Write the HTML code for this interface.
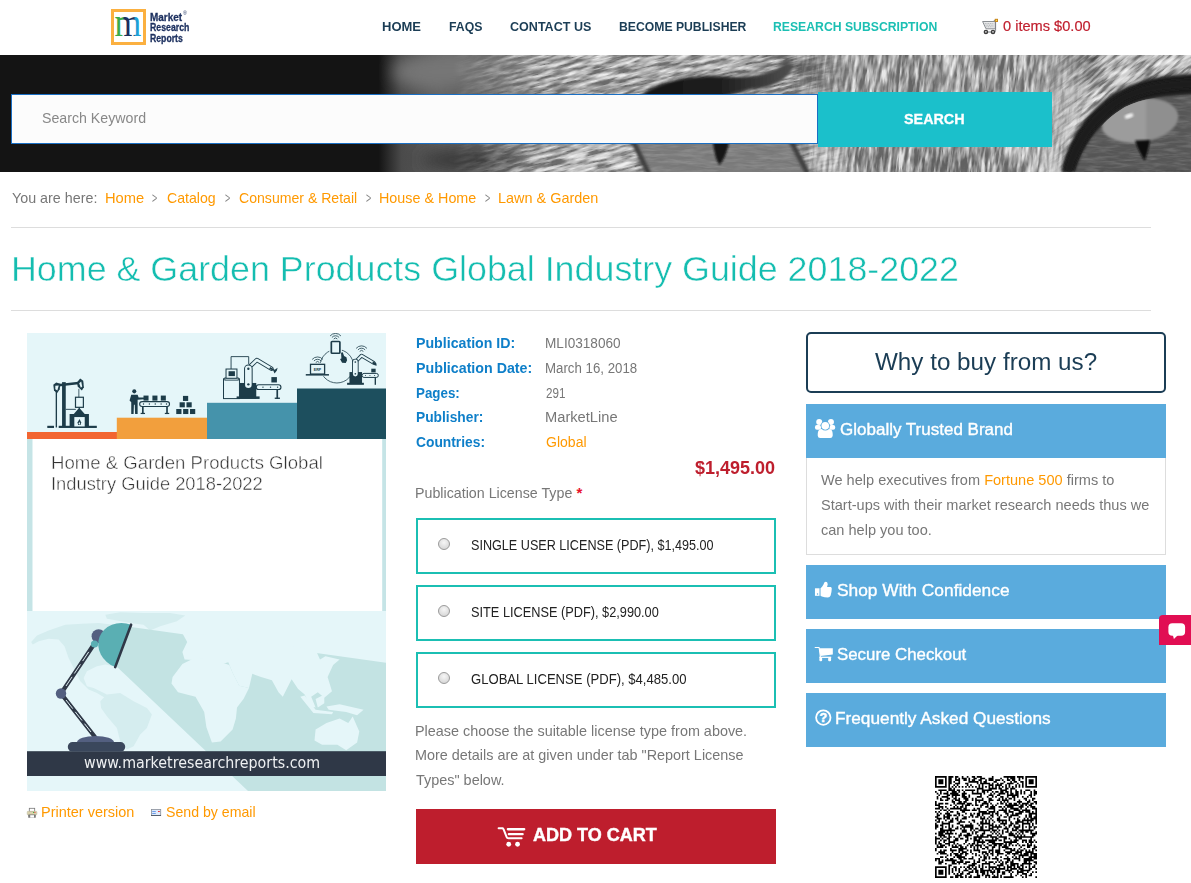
<!DOCTYPE html>
<html lang="en">
<head>
<meta charset="utf-8">
<title>Home &amp; Garden Products Global Industry Guide 2018-2022</title>
<style>
*{box-sizing:border-box;margin:0;padding:0}
html,body{width:1191px;height:883px;overflow:hidden;background:#fff}
body{font-family:"Liberation Sans",sans-serif;font-size:15px;color:#777;position:relative}
a{text-decoration:none;color:#f90}
.abs{position:absolute}
.t{position:absolute;white-space:nowrap;line-height:1;display:inline-block;transform-origin:0 0;font-weight:normal;margin:0;padding:0}
#logo{left:111px;top:9px;width:35px;height:36px;border:3px solid #fbb040;background:#fff}
#banner{left:0;top:55px;width:1191px;height:117px;background:#141414;overflow:hidden}
#sbox{left:11px;top:94px;width:807px;height:50px;background:#fcfcfc;border:1px solid #1a6fc4}
#sbtn{left:818px;top:92px;width:234px;height:55px;background:#1bc0cb}
.hr{left:11px;height:1px;background:#ddd;width:1140px}
.lic{left:416px;width:360px;height:56px;border:2px solid #1bbfb3;background:#fff}
.lic i{position:absolute;left:20px;top:18px;width:12px;height:12px;border-radius:50%;border:1px solid #9a9a9a;background:radial-gradient(circle at 50% 35%,#f6f6f6,#cfcfcf)}
#addcart{left:416px;top:809px;width:360px;height:55px;background:#be1e2d}
#why{left:806px;top:332px;width:360px;height:61px;border:2px solid #1b3d55;border-radius:5px}
.ph{left:806px;width:360px;height:54px;background:#5aabdd}
#pbody{left:806px;top:458px;width:360px;height:97px;border:1px solid #ddd;border-top:none}
#chat{left:1159px;top:615px;width:32px;height:30px;background:#e10e53;border-radius:4px 0 0 0}
</style>
</head>
<body>
<div class="abs" id="logo"></div>
<div class="abs" id="banner"><svg width="1191" height="117" viewBox="0 55 1191 117" style="position:absolute;left:0;top:0;display:block">
<defs>
<linearGradient id="fg" gradientUnits="userSpaceOnUse" x1="0" x2="1191" y1="0" y2="0">
<stop offset="0" stop-color="#141414"/><stop offset="0.318" stop-color="#141414"/><stop offset="0.337" stop-color="#4a4a4a"/><stop offset="0.37" stop-color="#606060"/><stop offset="0.43" stop-color="#767676"/><stop offset="0.48" stop-color="#8e8e8e"/><stop offset="1" stop-color="#949494"/>
</linearGradient>
<linearGradient id="fadeA" gradientUnits="userSpaceOnUse" x1="0" x2="1191" y1="0" y2="0">
<stop offset="0.38" stop-color="#000"/><stop offset="0.46" stop-color="#fff"/><stop offset="0.66" stop-color="#fff"/><stop offset="0.72" stop-color="#000"/>
</linearGradient>
<linearGradient id="fadeB" gradientUnits="userSpaceOnUse" x1="0" x2="1191" y1="0" y2="0">
<stop offset="0.66" stop-color="#000"/><stop offset="0.72" stop-color="#fff"/><stop offset="0.87" stop-color="#fff"/><stop offset="0.92" stop-color="#000"/>
</linearGradient>
<linearGradient id="fadeC" gradientUnits="userSpaceOnUse" x1="0" x2="1191" y1="0" y2="0">
<stop offset="0.87" stop-color="#000"/><stop offset="0.92" stop-color="#fff"/><stop offset="1" stop-color="#fff"/>
</linearGradient>
<mask id="mA"><rect x="0" y="55" width="1191" height="117" fill="url(#fadeA)"/></mask>
<mask id="mB"><rect x="0" y="55" width="1191" height="117" fill="url(#fadeB)"/></mask>
<mask id="mC"><rect x="0" y="55" width="1191" height="117" fill="url(#fadeC)"/></mask>
<filter id="furH" x="0" y="0" width="100%" height="100%">
<feTurbulence type="fractalNoise" baseFrequency="0.05 0.3" numOctaves="3" seed="7"/>
<feColorMatrix type="matrix" values="0 0 0 0 0.95  0 0 0 0 0.95  0 0 0 0 0.95  3 0 0 0 -1.05" result="w"/>
<feTurbulence type="fractalNoise" baseFrequency="0.045 0.28" numOctaves="3" seed="31"/>
<feColorMatrix type="matrix" values="0 0 0 0 0.12  0 0 0 0 0.12  0 0 0 0 0.12  0 3 0 0 -1.1" result="k"/>
<feMerge><feMergeNode in="w"/><feMergeNode in="k"/></feMerge>
</filter>
<filter id="furV" x="0" y="0" width="100%" height="100%">
<feTurbulence type="fractalNoise" baseFrequency="0.3 0.045" numOctaves="3" seed="11"/>
<feColorMatrix type="matrix" values="0 0 0 0 0.95  0 0 0 0 0.95  0 0 0 0 0.95  3 0 0 0 -1.05" result="w"/>
<feTurbulence type="fractalNoise" baseFrequency="0.28 0.04" numOctaves="3" seed="3"/>
<feColorMatrix type="matrix" values="0 0 0 0 0.12  0 0 0 0 0.12  0 0 0 0 0.12  0 3 0 0 -1.1" result="k"/>
<feMerge><feMergeNode in="w"/><feMergeNode in="k"/></feMerge>
</filter>
<filter id="bl4"><feGaussianBlur stdDeviation="4"/></filter>
<filter id="bl2"><feGaussianBlur stdDeviation="1.6"/></filter>
<filter id="bl1"><feGaussianBlur stdDeviation="0.8"/></filter>
<filter id="bl8"><feGaussianBlur stdDeviation="8"/></filter>
<linearGradient id="lidg" gradientUnits="userSpaceOnUse" x1="640" x2="800" y1="0" y2="0"><stop offset="0" stop-color="#141414"/><stop offset="0.5" stop-color="#1e1e1e"/><stop offset="1" stop-color="#555"/></linearGradient>
</defs>
<rect x="0" y="55" width="1191" height="117" fill="url(#fg)"/>
<g filter="url(#bl8)">
<ellipse cx="455" cy="72" rx="62" ry="20" fill="#767676"/>

<ellipse cx="470" cy="160" rx="50" ry="13" fill="#3a3a3a"/>
<ellipse cx="470" cy="92" rx="30" ry="6" fill="#5a5a5a"/>
<ellipse cx="598" cy="158" rx="42" ry="15" fill="#cfcfcf"/>
<ellipse cx="640" cy="66" rx="120" ry="16" fill="#adadad"/>
<ellipse cx="800" cy="70" rx="30" ry="18" fill="#5a5a5a"/>
<ellipse cx="826" cy="160" rx="14" ry="16" fill="#e0e0e0"/><ellipse cx="935" cy="163" rx="82" ry="13" fill="#5c5c5c"/><ellipse cx="1040" cy="162" rx="14" ry="14" fill="#d0d0d0"/>
<ellipse cx="908" cy="70" rx="12" ry="22" fill="#5e5e5e"/>
<ellipse cx="1004" cy="72" rx="10" ry="22" fill="#666"/>
<ellipse cx="960" cy="66" rx="26" ry="14" fill="#b0b0b0"/>
<ellipse cx="1062" cy="110" rx="16" ry="46" fill="#bdbdbd"/>
<ellipse cx="1150" cy="58" rx="60" ry="12" fill="#cfcfcf"/>
<ellipse cx="1090" cy="70" rx="18" ry="10" fill="#4a4a4a"/>
</g>
<path d="M1056 175 C1060 128 1092 92 1134 73 C1160 62 1191 60 1195 60" fill="none" stroke="#d0d0d0" stroke-width="22" filter="url(#bl4)"/>
<ellipse cx="1091" cy="58" rx="7" ry="6" fill="#333" filter="url(#bl2)"/>
<g mask="url(#mA)"><g transform="rotate(-14 600 113)"><rect x="300" y="-60" width="700" height="340" filter="url(#furH)" opacity="0.85"/></g></g>
<g mask="url(#mB)"><g transform="rotate(6 940 113)"><rect x="760" y="20" width="360" height="190" filter="url(#furV)" opacity="0.85"/></g></g>
<g mask="url(#mC)"><g transform="rotate(-38 1120 113)"><rect x="960" y="-40" width="340" height="300" filter="url(#furH)" opacity="0.85"/></g></g>
<!-- left eye -->
<path d="M638 98 C652 85 680 76 712 76 C745 77 766 80 786 62 L795 65 C788 80 774 87 752 89 L722 97 Z" fill="url(#lidg)" filter="url(#bl2)"/>
<path d="M632 141 L649 174 L808 174 L791 141 Z" fill="#7c7c7c" filter="url(#bl1)"/>
<rect x="640" y="141" width="160" height="34" filter="url(#furH)" opacity="0.12"/>
<path d="M633 141 L649 174 M791 141 L808 174" fill="none" stroke="#3c3c3c" stroke-width="5" filter="url(#bl2)"/>
<path d="M713 142 L729 142 C727.5 152 723.5 160 719.5 165 C716 160 714 152 713 142 Z" fill="#141414" filter="url(#bl1)"/>
<!-- right eye -->
<clipPath id="irc"><path d="M1075 172 C1082 146 1100 122 1125 107 C1148 96 1170 95 1215 93 L1215 172 Z"/></clipPath>
<path d="M1061 172 C1067 140 1088 108 1120 90 C1145 77 1170 74 1215 73 L1215 172 Z" fill="#1b1b1b" filter="url(#bl2)"/>
<path d="M1075 172 C1082 146 1100 122 1125 107 C1148 96 1170 95 1215 93 L1215 172 Z" fill="#565656" filter="url(#bl2)"/>
<g clip-path="url(#irc)"><rect x="1060" y="90" width="140" height="90" filter="url(#furH)" opacity="0.14"/><ellipse cx="1140.6" cy="120.2" rx="38" ry="21.7" fill="#8f8f8f" transform="rotate(-8 1140.6 120.2)" filter="url(#bl1)"/>
<path d="M1102 130 C1104 110 1125 98 1146 99 L1146 142 C1125 144 1108 140 1102 130 Z" fill="#9c9c9c" filter="url(#bl2)"/></g>
<path d="M1068 172 C1075 143 1094 115 1122 98.5 C1146 86 1170 84.5 1215 83" fill="none" stroke="#1b1b1b" stroke-width="9" filter="url(#bl2)"/>
<ellipse cx="1129" cy="116" rx="4.5" ry="2.2" fill="#f0f0f0" transform="rotate(-20 1129 116)" filter="url(#bl1)"/>
<path d="M1135 140.6 L1150 140 C1149 148 1147 155 1144.6 161 C1141 155 1137 148 1135 140.6 Z" fill="#101010" filter="url(#bl1)"/>
</svg>
</div>
<div class="abs" id="sbox"></div>
<div class="abs" id="sbtn"></div>
<div class="abs hr" style="top:227px"></div>
<div class="abs hr" style="top:310px"></div>
<div class="abs" id="cover" style="left:27px;top:333px;width:359px;height:458px;background:#e5f6f9"><svg width="359" height="458" viewBox="27 333 359 458" style="position:absolute;left:0;top:0;display:block">
<rect x="27" y="333" width="359" height="458" fill="#e5f6f9"/>
<!-- steps -->
<rect x="27" y="432" width="90" height="7" fill="#f26531"/>
<rect x="116.8" y="417.7" width="90.4" height="21.3" fill="#f29f3d"/>
<rect x="207" y="402.8" width="90.2" height="36.2" fill="#4593ab"/>
<rect x="297" y="388.5" width="89" height="50.5" fill="#1d4f5e"/>
<!-- white panel -->
<rect x="27" y="439" width="359" height="172" fill="#c5e4e6"/>
<rect x="32.5" y="439" width="349.7" height="172" fill="#fff"/>
<!-- map + beam -->
<g fill="#d5edef"><path d="M31.2 642.1 L37.0 635.5 L48.6 630.5 L65.3 624.7 L81.9 623.8 L98.6 623.0 L113.6 624.7 L126.9 631.3 L133.6 641.3 L128.6 651.3 L121.9 662.9 L113.6 666.3 L105.3 664.6 L96.9 666.3 L86.9 671.3 L83.6 677.9 L86.9 686.3 L93.6 687.9 L100.3 691.3 L106.9 694.6 L105.3 697.9 L96.9 692.9 L88.6 689.6 L80.3 681.3 L75.3 671.3 L68.6 658.0 L64.5 646.3 L58.6 639.6 L48.6 638.8 L38.7 641.3 L32.8 644.6Z"/><path d="M105.3 614.7 L120.2 612.2 L143.6 613.0 L170.2 613.0 L185.2 615.5 L176.9 621.3 L160.2 626.3 L150.2 630.5 L143.6 624.7 L130.2 623.0 L116.9 620.5 L106.9 618.8Z"/><path d="M100.3 701.2 L106.9 694.6 L120.2 692.9 L133.6 701.2 L146.9 707.9 L151.9 714.6 L146.9 727.9 L140.2 734.5 L133.6 746.2 L126.9 749.5 L120.2 741.2 L116.9 727.9 L106.9 716.2 L101.1 707.9Z"/></g>
<path d="M131 627 L386 662.7 L386 791 L248 791 L115 665 Z" fill="#c3e3e3"/>
<g fill="#e5f6f9"><path d="M181.3 631.2 L315.6 649.8 L320.0 659.6 L325.4 656.3 L339.6 659.6 L333.1 665.0 L327.6 677.1 L332.0 691.2 L324.3 697.8 L317.8 692.3 L311.2 696.7 L315.6 707.6 L310.1 706.5 L304.7 694.5 L298.1 689.1 L291.6 679.2 L282.8 696.7 L278.5 692.3 L271.9 680.3 L261.0 677.1 L252.3 673.8 L249.0 688.0 L239.2 685.8 L232.6 672.7 L228.3 662.2 L213.0 666.6 L204.2 661.1 L193.3 660.0 L184.6 659.6 L182.4 651.9 L187.2 642.1Z"/><path d="M172.6 677.1 L182.4 664.0 L195.5 657.4 L213.0 659.6 L229.3 665.0 L232.6 672.7 L239.2 685.8 L249.0 688.0 L243.5 698.9 L237.0 707.6 L235.9 718.5 L232.6 729.5 L226.1 736.0 L220.6 741.5 L211.9 742.6 L206.4 727.3 L204.2 712.0 L195.5 696.7 L178.0 692.3 L171.5 683.6Z"/><path d="M315.6 729.5 L326.5 722.9 L339.6 718.5 L348.3 722.9 L352.7 716.4 L359.3 731.6 L357.1 742.6 L346.2 750.2 L337.4 744.7 L322.1 744.7 L314.5 740.4Z"/><path d="M300.3 696.7 L304.7 695.6 L315.6 709.8 L333.1 712.0 L332.0 714.2 L313.4 713.1ZM326.5 706.5 L339.6 704.3 L363.6 709.8 L357.1 715.3 L346.2 712.0 L328.7 709.8ZM315.6 698.9 L324.3 694.5 L324.3 703.3 L317.8 707.6Z"/></g>
<!-- bar -->
<rect x="27" y="751.2" width="359" height="24.8" fill="#2f3847"/>
<g>
<path d="M61 693.5 L93.5 645" stroke="#2f3847" stroke-width="4.2" stroke-linecap="round" fill="none"/>
<path d="M66 686 L90 650" stroke="#dfeff2" stroke-width="1" stroke-dasharray="11 4" fill="none"/>
<path d="M61 693.5 L95 737" stroke="#2f3847" stroke-width="4.2" stroke-linecap="round" fill="none"/>
<path d="M66 700 L91 732" stroke="#dfeff2" stroke-width="1" stroke-dasharray="11 4" fill="none"/>
<circle cx="61" cy="693.5" r="5.2" fill="#535f80"/>
<circle cx="98.6" cy="636.3" r="7" fill="#535f80"/>
<circle cx="94.5" cy="644" r="3.6" fill="#5aafb3"/>
<path d="M131.1 624.7 A22.65 26 110.6 0 0 115.2 667.1 Z" fill="#5aafb3"/>
<path d="M131.1 624.7 L115.2 667.1" stroke="#2f3847" stroke-width="2.6" stroke-linecap="round"/>
<ellipse cx="95.5" cy="742.5" rx="18.5" ry="6.6" fill="#535f80"/>
<rect x="67.8" y="742" width="57.4" height="9.6" rx="4.7" fill="#3a475c"/>
</g>
<g><rect x="47.28" y="425.79" width="6.72" height="2.18" fill="#1d3c49"/>
<rect x="58.70" y="425.79" width="38.12" height="2.18" fill="#1d3c49"/>
<rect x="62.06" y="382.13" width="3.69" height="44.50" fill="#1d3c49"/>
<rect x="55.68" y="385.49" width="1.34" height="41.98" fill="#1d3c49"/>
<path d="M54.00 385.83 L83.05 382.47" fill="none" stroke="#1d3c49" stroke-width="2.6" stroke-linecap="butt" stroke-linejoin="miter"/>
<path d="M53.32 384.65 L56.18 382.47 L60.38 383.81 L59.71 389.19 L57.02 393.22 L54.00 390.53Z" fill="#1d3c49"/>
<path d="M55.34 385.83 L58.70 385.49 L57.36 390.53 L55.34 389.19Z" fill="#e5f6f9"/>
<path d="M76.83 382.47 L80.19 378.44 L83.22 380.79 L83.89 387.17 L81.87 390.53 L77.84 386.83Z" fill="#1d3c49"/>
<path d="M79.19 383.14 L81.20 381.46 L82.21 386.50 L80.86 387.84Z" fill="#e5f6f9"/>
<path d="M78.85 388.85 L78.85 397.58" fill="none" stroke="#1d3c49" stroke-width="0.8" stroke-linecap="butt" stroke-linejoin="miter"/>
<rect x="75.49" y="397.25" width="7.89" height="10.08" fill="#e5f6f9" stroke="#1d3c49" stroke-width="1.2"/>
<path d="M79.35 407.32 L79.35 411.52" fill="none" stroke="#1d3c49" stroke-width="0.8" stroke-linecap="butt" stroke-linejoin="miter"/>
<path d="M65.75 409.34 L75.83 409.34" fill="none" stroke="#1d3c49" stroke-width="0.9" stroke-linecap="butt" stroke-linejoin="miter"/>
<path d="M69.61 426.63 L69.61 414.04 L73.81 414.04 L79.19 407.66 L84.73 414.04 L88.93 414.04 L88.93 426.63Z" fill="#1d3c49"/>
<rect x="74.32" y="417.06" width="10.41" height="9.40" fill="#e5f6f9"/>
<path d="M79.52 419.08 L81.20 422.43 L80.53 425.12 L78.18 425.12 L77.51 422.43Z" fill="#1d3c49"/>
<path d="M79.35 421.76 L80.19 423.78 L79.35 424.79 L78.51 423.78Z" fill="#e5f6f9"/>
<circle cx="134.27" cy="391.37" r="2.02" fill="#1d3c49"/>
<path d="M131.24 394.73 L137.62 394.73 L138.63 397.58 L144.34 397.58 L144.34 399.26 L137.62 399.76 L137.62 414.04 L135.10 414.04 L134.77 404.80 L133.93 404.80 L133.59 414.04 L131.24 414.04 L131.24 402.28 L129.56 400.60Z" fill="#1d3c49"/>
<rect x="143.50" y="395.57" width="5.04" height="5.04" fill="#1d3c49"/>
<rect x="152.40" y="395.57" width="5.04" height="5.04" fill="#1d3c49"/>
<rect x="160.80" y="395.57" width="5.04" height="5.04" fill="#1d3c49"/>
<rect x="139.64" y="401.61" width="29.89" height="4.87" fill="#e5f6f9" stroke="#1d3c49" stroke-width="1.1" rx="2.5"/>
<circle cx="143.50" cy="403.96" r="0.67" fill="#1d3c49"/>
<circle cx="149.38" cy="403.96" r="0.67" fill="#1d3c49"/>
<circle cx="155.26" cy="403.96" r="0.67" fill="#1d3c49"/>
<circle cx="161.13" cy="403.96" r="0.67" fill="#1d3c49"/>
<circle cx="166.51" cy="403.96" r="0.67" fill="#1d3c49"/>
<rect x="141.99" y="406.48" width="1.68" height="7.56" fill="#1d3c49"/>
<rect x="166.17" y="406.48" width="1.68" height="7.56" fill="#1d3c49"/>
<rect x="140.65" y="412.86" width="4.37" height="1.18" fill="#1d3c49"/>
<rect x="164.83" y="412.86" width="4.37" height="1.18" fill="#1d3c49"/>
<rect x="176.25" y="409.00" width="5.21" height="5.04" fill="#1d3c49"/>
<rect x="183.13" y="409.00" width="5.21" height="5.04" fill="#1d3c49"/>
<rect x="190.02" y="409.00" width="5.21" height="5.04" fill="#1d3c49"/>
<rect x="179.61" y="402.28" width="5.21" height="5.04" fill="#1d3c49"/>
<rect x="186.49" y="402.28" width="5.21" height="5.04" fill="#1d3c49"/>
<rect x="182.96" y="395.90" width="5.21" height="5.04" fill="#1d3c49"/>
<path d="M231.07 369.03 L231.07 356.61 L248.70 356.61 L248.70 364.00" fill="none" stroke="#1d3c49" stroke-width="0.9" stroke-linecap="butt" stroke-linejoin="miter"/>
<rect x="223.51" y="378.77" width="15.95" height="19.82" fill="#e5f6f9" stroke="#1d3c49" stroke-width="1"/>
<rect x="224.85" y="377.93" width="13.43" height="2.18" fill="#e5f6f9" stroke="#1d3c49" stroke-width="0.9"/>
<rect x="226.03" y="369.03" width="10.92" height="9.24" fill="#e5f6f9" stroke="#1d3c49" stroke-width="1"/>
<rect x="228.55" y="371.22" width="6.38" height="4.87" fill="#1d3c49"/>
<rect x="239.46" y="382.97" width="16.79" height="15.62" fill="#1d3c49"/>
<rect x="236.61" y="396.41" width="23.01" height="2.52" fill="#1d3c49"/>
<path d="M250.38 366.18 L256.76 359.97 L271.37 368.70" fill="none" stroke="#1d3c49" stroke-width="4.4" stroke-linecap="round" stroke-linejoin="round"/>
<path d="M250.38 366.18 L256.76 359.97 L271.37 368.70" fill="none" stroke="#e5f6f9" stroke-width="2.6" stroke-linecap="round" stroke-linejoin="round"/>
<path d="M248.36 368.70 L248.36 384.65" fill="none" stroke="#1d3c49" stroke-width="8.6" stroke-linecap="round" stroke-linejoin="miter"/>
<path d="M248.36 368.70 L248.36 384.65" fill="none" stroke="#e5f6f9" stroke-width="6.6" stroke-linecap="round" stroke-linejoin="miter"/>
<circle cx="248.36" cy="368.70" r="1.18" fill="#1d3c49"/>
<circle cx="248.36" cy="384.32" r="1.18" fill="#1d3c49"/>
<path d="M270.19 367.02 L274.73 369.71 L277.58 367.69 L276.91 370.38 L274.56 373.40 L273.22 370.38 L269.19 369.03Z" fill="#1d3c49"/>
<rect x="271.37" y="377.09" width="5.54" height="5.37" fill="#1d3c49"/>
<rect x="256.26" y="384.82" width="24.69" height="4.70" fill="#e5f6f9" stroke="#1d3c49" stroke-width="1.1" rx="2.4"/>
<circle cx="262.97" cy="387.17" r="0.67" fill="#1d3c49"/>
<circle cx="270.53" cy="387.17" r="0.67" fill="#1d3c49"/>
<circle cx="277.58" cy="387.17" r="0.67" fill="#1d3c49"/>
<rect x="276.41" y="389.52" width="1.68" height="9.40" fill="#1d3c49"/>
<rect x="274.73" y="397.58" width="5.21" height="1.34" fill="#1d3c49"/>
<circle cx="336.86" cy="366.18" r="16.79" fill="none" stroke="#1d3c49" stroke-width="0.8"/>
<rect x="329.30" y="339.82" width="12.59" height="14.78" fill="#e5f6f9"/>
<rect x="331.32" y="341.49" width="8.56" height="11.75" fill="#e5f6f9" stroke="#1d3c49" stroke-width="1.7" rx="0.8"/>
<path d="M333.72 338.98 A2.35 2.35 0 0 1 337.32 338.98" fill="none" stroke="#1d3c49" stroke-width="0.8"/>
<path d="M331.91 337.46 A4.70 4.70 0 0 1 339.12 337.46" fill="none" stroke="#1d3c49" stroke-width="0.8"/>
<path d="M330.11 335.95 A7.05 7.05 0 0 1 340.92 335.95" fill="none" stroke="#1d3c49" stroke-width="0.8"/>
<path d="M341.06 352.75 L342.74 352.24 L344.08 356.10 L346.43 357.28 L347.10 360.30 L345.76 362.99 L342.07 362.65 L340.05 358.96 L341.39 358.62Z" fill="#1d3c49"/>
<rect x="307.47" y="362.82" width="20.15" height="13.43" fill="#e5f6f9"/>
<rect x="310.50" y="364.33" width="14.11" height="9.74" fill="#e5f6f9" stroke="#1d3c49" stroke-width="1.3"/>
<rect x="305.79" y="374.07" width="23.17" height="1.51" fill="#1d3c49"/>
<text x="317.5" y="370.6" text-anchor="middle" font-family="'Liberation Sans',sans-serif" font-size="3.6" font-weight="bold" fill="#1d3c49">ERP</text>
<path d="M315.75 362.49 A2.35 2.35 0 0 1 319.35 362.49" fill="none" stroke="#1d3c49" stroke-width="0.8"/>
<path d="M313.95 360.97 A4.70 4.70 0 0 1 321.15 360.97" fill="none" stroke="#1d3c49" stroke-width="0.8"/>
<path d="M312.15 359.46 A7.05 7.05 0 0 1 322.95 359.46" fill="none" stroke="#1d3c49" stroke-width="0.8"/>
<rect x="349.45" y="372.06" width="12.59" height="11.75" fill="#1d3c49"/>
<rect x="347.10" y="382.80" width="16.79" height="2.02" fill="#1d3c49"/>
<path d="M357.01 360.30 L361.54 355.60 L373.80 362.82" fill="none" stroke="#1d3c49" stroke-width="3.8" stroke-linecap="round" stroke-linejoin="round"/>
<path d="M357.01 360.30 L361.54 355.60 L373.80 362.82" fill="none" stroke="#e5f6f9" stroke-width="2.0" stroke-linecap="round" stroke-linejoin="round"/>
<path d="M355.33 361.98 L355.33 374.07" fill="none" stroke="#1d3c49" stroke-width="6.6" stroke-linecap="round" stroke-linejoin="miter"/>
<path d="M355.33 361.98 L355.33 374.07" fill="none" stroke="#e5f6f9" stroke-width="4.8" stroke-linecap="round" stroke-linejoin="miter"/>
<circle cx="355.33" cy="361.98" r="0.84" fill="#1d3c49"/>
<circle cx="355.33" cy="373.74" r="0.84" fill="#1d3c49"/>
<path d="M372.96 361.31 L376.32 363.32 L376.66 365.68 L374.64 365.34 L372.29 363.32Z" fill="#1d3c49"/>
<path d="M359.74 351.40 A2.35 2.35 0 0 1 363.35 351.40" fill="none" stroke="#1d3c49" stroke-width="0.8"/>
<path d="M357.94 349.89 A4.70 4.70 0 0 1 365.15 349.89" fill="none" stroke="#1d3c49" stroke-width="0.8"/>
<path d="M356.14 348.38 A7.05 7.05 0 0 1 366.95 348.38" fill="none" stroke="#1d3c49" stroke-width="0.8"/>
<rect x="371.28" y="368.70" width="4.37" height="3.69" fill="#1d3c49"/>
<rect x="362.05" y="373.40" width="16.29" height="4.03" fill="#e5f6f9" stroke="#1d3c49" stroke-width="1" rx="2"/>
<circle cx="365.41" cy="375.42" r="0.50" fill="#1d3c49"/>
<circle cx="369.94" cy="375.42" r="0.50" fill="#1d3c49"/>
<circle cx="374.64" cy="375.42" r="0.50" fill="#1d3c49"/>
<rect x="374.64" y="377.43" width="1.34" height="7.39" fill="#1d3c49"/></g>
</svg></div>
<div class="abs lic" style="top:518px"><i></i></div>
<div class="abs lic" style="top:585px"><i></i></div>
<div class="abs lic" style="top:652px"><i></i></div>
<div class="abs" id="addcart"></div>
<div class="abs" id="why"></div>
<div class="abs ph" style="top:404px"></div>
<div class="abs" id="pbody"></div>
<div class="abs ph" style="top:565px"></div>
<div class="abs ph" style="top:629px"></div>
<div class="abs ph" style="top:693px"></div>
<div class="abs" id="chat"></div>
<svg width="1191" height="883" viewBox="0 0 1191 883" style="position:absolute;left:0;top:0;pointer-events:none"><defs><linearGradient id="mg" x1="0" x2="1" y1="0" y2="0"><stop offset="0" stop-color="#3aaa4a"/><stop offset="0.3" stop-color="#3aaa4a"/><stop offset="0.36" stop-color="#1b2f5e"/><stop offset="0.7" stop-color="#1b2f5e"/><stop offset="0.78" stop-color="#1f9fd6"/><stop offset="1" stop-color="#1f9fd6"/></linearGradient></defs>
<text x="0" y="0" transform="translate(114.6 35.6) scale(0.86 1)" font-family="'Liberation Serif',serif" font-size="40" fill="url(#mg)">m</text>
<g>
<path d="M982.6 21.5 L995.3 21.5 L995.3 28.8 L986 28.8 Z" fill="#e9eaeb" stroke="#8a8e92" stroke-width="1"/>
<path d="M984.8 23.6 H993.6 M985.6 25.2 H993.6 M986.4 26.8 H993.6" stroke="#9a9ea2" stroke-width="0.8" stroke-dasharray="1 0.7"/>
<path d="M993.8 20.6 L995.6 20 L995.6 30.4 Q995.6 32 994 32 L984 32" fill="none" stroke="#7d8186" stroke-width="1"/>
<rect x="994.8" y="18.8" width="3.2" height="3.2" fill="#c8861c"/><rect x="995.8" y="19.8" width="1.2" height="1.2" fill="#ffe14a"/>
<circle cx="985.9" cy="32" r="2.3" fill="#3c3c3c"/><circle cx="985.9" cy="31.8" r="0.9" fill="#ddd"/>
<circle cx="993" cy="32" r="2.3" fill="#3c3c3c"/><circle cx="993" cy="31.8" r="0.9" fill="#ddd"/>
</g>
<g fill="#fff">
<circle cx="819.21" cy="421.90" r="3.0"/><circle cx="830.95" cy="421.90" r="3.0"/>
<rect x="814.96" y="424.88" width="6.15" height="4.96" rx="2"/>
<rect x="829.25" y="424.88" width="5.95" height="4.96" rx="2"/>
<circle cx="825.28" cy="425.87" r="4.6" fill="#5aabdd"/>
<circle cx="825.28" cy="425.87" r="3.8"/>
<path d="M817.74 437.98 L817.74 433.81 Q817.94 429.05 821.51 428.97 Q825.28 432.22 829.05 428.97 Q832.54 429.05 832.70 433.81 L832.70 435.79 Q832.42 437.98 830.24 437.98 L820.12 437.98 Q817.94 437.98 817.74 435.79 Z"/>
</g>
<g fill="#fff">
<rect x="814.96" y="588.29" width="4.56" height="7.54"/>
<circle cx="817.54" cy="594.05" r="0.7" fill="#5aabdd"/>
<path d="M820.52 588.29 L821.90 586.90 L823.49 584.52 L824.29 582.54 Q825.67 581.15 827.14 582.34 L827.74 584.13 L827.06 586.90 L831.03 587.10 Q832.14 588.10 831.67 589.68 L831.43 592.06 L830.63 595.44 Q829.84 597.30 827.86 597.46 L824.68 597.30 L821.90 596.51 L820.52 595.83 Z"/>
</g>
<g fill="#fff">
<path d="M815.16 647.46 L819.13 647.46 L820.40 657.06" fill="none" stroke="#fff" stroke-width="1.1" stroke-linecap="round" stroke-linejoin="round"/>
<path d="M819.21 648.13 L832.82 648.13 L832.82 654.48 L820.40 655.95Z"/>
<rect x="819.21" y="656.67" width="12.02" height="1.27"/>
<rect x="819.33" y="657.46" width="2.86" height="3.81" rx="1.2"/><rect x="828.13" y="657.46" width="2.98" height="3.81" rx="1.2"/>
</g>
<circle cx="823.3" cy="717.6" r="7.2" fill="none" stroke="#fff" stroke-width="1.8"/>
<text x="823.3" y="722" text-anchor="middle" font-family="'Liberation Sans',sans-serif" font-weight="bold" font-size="12.5" fill="#fff" stroke="#fff" stroke-width="0.6">?</text>
<g fill="#fff"><rect x="1168.4" y="623.2" width="16.7" height="12.6" rx="4"/><path d="M1172.8 635 L1173.9 639 L1178 635 Z"/></g>
<g stroke="#fff" fill="none" stroke-linecap="round" stroke-linejoin="round">
<path d="M498.61 828.24 L502.69 828.24 Q503.77 829.62 504.41 831.34 L506.57 836.93 Q507.00 838.31 508.50 838.31 L521.63 838.22" stroke-width="2"/>
<path d="M507.86 829.27 L524.21 829.27" stroke-width="2.3"/>
<path d="M508.72 834.14 L522.70 834.14" stroke-width="2.1"/>
</g>
<circle cx="508.72" cy="844.25" r="2.4" fill="#fff"/><circle cx="517.54" cy="844.25" r="2.4" fill="#fff"/>
<g>
<rect x="29.3" y="808.3" width="5.4" height="3.4" fill="#fff" stroke="#777" stroke-width="0.8"/>
<rect x="27.2" y="811.3" width="9.7" height="3.6" rx="0.8" fill="#d9d2ac" stroke="#b9b49a" stroke-width="0.5"/>
<rect x="34.4" y="812" width="1" height="1" fill="#e33"/><rect x="33" y="812" width="1" height="1" fill="#4b4"/>
<rect x="28.2" y="814.6" width="7.6" height="3.2" rx="0.6" fill="#7b7b7b"/>
<rect x="30.2" y="815.2" width="3.8" height="2.4" fill="#fff"/>
</g>
<g>
<rect x="151.4" y="809.4" width="9.3" height="6.2" fill="#dfeafb" stroke="#8a8f99" stroke-width="0.8"/>
<rect x="151" y="815" width="10" height="0.9" fill="#4d5766"/>
<rect x="152.2" y="811.1" width="3.6" height="0.7" fill="#3f7fe0"/><rect x="152.2" y="813.1" width="3.6" height="0.7" fill="#3f7fe0"/>
<rect x="158" y="811" width="1.8" height="1" fill="#e33"/>
</g></svg>
<svg width="102" height="102" viewBox="0 0 61 61" style="position:absolute;left:935px;top:776px"><rect width="61" height="61" fill="#fff"/><path d="M0 0.5h7M8 0.5h3M12 0.5h2M16 0.5h1M19 0.5h1M22 0.5h2M25 0.5h3M34 0.5h1M41 0.5h7M49 0.5h4M54 0.5h7M0 1.5h1M6 1.5h1M8 1.5h2M12 1.5h1M14 1.5h1M16 1.5h3M20 1.5h1M23 1.5h2M27 1.5h3M32 1.5h3M39 1.5h1M43 1.5h1M45 1.5h3M50 1.5h1M52 1.5h1M54 1.5h1M60 1.5h1M0 2.5h1M2 2.5h3M6 2.5h1M8 2.5h2M12 2.5h3M17 2.5h2M20 2.5h1M22 2.5h2M26 2.5h2M30 2.5h1M32 2.5h3M36 2.5h3M40 2.5h1M43 2.5h2M46 2.5h2M50 2.5h1M54 2.5h1M56 2.5h3M60 2.5h1M0 3.5h1M2 3.5h3M6 3.5h1M8 3.5h2M11 3.5h1M14 3.5h1M20 3.5h6M27 3.5h1M29 3.5h2M35 3.5h2M41 3.5h1M45 3.5h1M47 3.5h2M51 3.5h2M54 3.5h1M56 3.5h3M60 3.5h1M0 4.5h1M2 4.5h3M6 4.5h1M8 4.5h2M12 4.5h3M18 4.5h2M25 4.5h1M27 4.5h6M34 4.5h1M37 4.5h1M39 4.5h2M43 4.5h4M49 4.5h1M52 4.5h1M54 4.5h1M56 4.5h3M60 4.5h1M0 5.5h1M6 5.5h1M8 5.5h1M11 5.5h1M13 5.5h1M19 5.5h1M21 5.5h1M26 5.5h1M28 5.5h1M32 5.5h3M36 5.5h4M42 5.5h1M44 5.5h1M48 5.5h1M50 5.5h1M52 5.5h1M54 5.5h1M60 5.5h1M0 6.5h7M8 6.5h1M10 6.5h1M12 6.5h1M14 6.5h1M16 6.5h1M18 6.5h1M20 6.5h1M22 6.5h1M24 6.5h1M26 6.5h1M28 6.5h1M30 6.5h1M32 6.5h1M34 6.5h1M36 6.5h1M38 6.5h1M40 6.5h1M42 6.5h1M44 6.5h1M46 6.5h1M48 6.5h1M50 6.5h1M52 6.5h1M54 6.5h7M8 7.5h2M11 7.5h1M25 7.5h4M32 7.5h5M38 7.5h2M42 7.5h2M45 7.5h3M2 8.5h5M8 8.5h4M13 8.5h2M16 8.5h1M18 8.5h6M25 8.5h1M28 8.5h6M39 8.5h4M45 8.5h1M48 8.5h1M51 8.5h1M54 8.5h3M59 8.5h1M0 9.5h1M3 9.5h1M7 9.5h1M10 9.5h3M14 9.5h1M17 9.5h1M22 9.5h1M25 9.5h1M28 9.5h2M31 9.5h1M34 9.5h1M36 9.5h2M39 9.5h2M42 9.5h2M45 9.5h1M48 9.5h2M51 9.5h1M53 9.5h1M57 9.5h1M59 9.5h2M1 10.5h1M3 10.5h1M5 10.5h3M9 10.5h5M16 10.5h3M22 10.5h6M29 10.5h1M33 10.5h1M35 10.5h1M38 10.5h4M43 10.5h1M45 10.5h2M48 10.5h2M51 10.5h1M53 10.5h1M57 10.5h1M59 10.5h2M2 11.5h1M7 11.5h2M10 11.5h5M16 11.5h2M20 11.5h1M27 11.5h1M32 11.5h3M37 11.5h2M43 11.5h7M56 11.5h2M59 11.5h1M1 12.5h1M4 12.5h4M10 12.5h1M12 12.5h1M16 12.5h3M20 12.5h1M25 12.5h3M31 12.5h1M34 12.5h1M36 12.5h1M39 12.5h2M43 12.5h1M46 12.5h2M49 12.5h1M52 12.5h1M55 12.5h1M57 12.5h1M1 13.5h1M3 13.5h1M7 13.5h2M11 13.5h2M14 13.5h1M17 13.5h3M22 13.5h1M24 13.5h1M28 13.5h1M32 13.5h2M38 13.5h1M40 13.5h1M42 13.5h1M44 13.5h2M47 13.5h1M53 13.5h2M58 13.5h2M3 14.5h2M6 14.5h2M10 14.5h1M12 14.5h3M18 14.5h2M22 14.5h1M24 14.5h5M32 14.5h3M37 14.5h2M40 14.5h4M47 14.5h1M50 14.5h1M54 14.5h1M56 14.5h1M58 14.5h1M0 15.5h1M10 15.5h2M14 15.5h2M17 15.5h2M24 15.5h1M26 15.5h1M29 15.5h2M32 15.5h1M39 15.5h1M41 15.5h1M43 15.5h1M49 15.5h3M55 15.5h2M59 15.5h2M0 16.5h1M2 16.5h3M6 16.5h2M11 16.5h1M13 16.5h5M19 16.5h3M24 16.5h1M28 16.5h4M33 16.5h1M37 16.5h1M39 16.5h2M42 16.5h1M44 16.5h2M47 16.5h2M50 16.5h1M52 16.5h4M57 16.5h2M60 16.5h1M0 17.5h3M9 17.5h1M12 17.5h1M16 17.5h1M18 17.5h3M22 17.5h1M24 17.5h2M27 17.5h2M31 17.5h1M34 17.5h1M36 17.5h1M42 17.5h8M51 17.5h2M54 17.5h1M56 17.5h2M2 18.5h3M6 18.5h1M11 18.5h1M13 18.5h1M15 18.5h2M18 18.5h1M27 18.5h1M30 18.5h2M33 18.5h3M38 18.5h2M41 18.5h1M43 18.5h4M50 18.5h3M55 18.5h1M57 18.5h3M0 19.5h3M4 19.5h1M7 19.5h1M9 19.5h7M17 19.5h2M23 19.5h1M25 19.5h2M32 19.5h4M40 19.5h1M42 19.5h1M45 19.5h5M51 19.5h1M54 19.5h1M58 19.5h3M3 20.5h1M5 20.5h2M8 20.5h1M15 20.5h6M22 20.5h3M26 20.5h1M31 20.5h1M35 20.5h1M38 20.5h5M44 20.5h1M47 20.5h4M52 20.5h5M60 20.5h1M0 21.5h1M2 21.5h1M7 21.5h1M9 21.5h2M13 21.5h1M16 21.5h2M26 21.5h5M32 21.5h4M37 21.5h1M41 21.5h2M44 21.5h3M50 21.5h3M54 21.5h3M58 21.5h1M60 21.5h1M1 22.5h1M3 22.5h1M6 22.5h3M13 22.5h2M18 22.5h1M21 22.5h1M23 22.5h1M25 22.5h2M28 22.5h5M34 22.5h1M36 22.5h2M42 22.5h2M46 22.5h1M48 22.5h4M56 22.5h5M1 23.5h2M5 23.5h1M7 23.5h3M11 23.5h2M14 23.5h1M16 23.5h1M21 23.5h2M25 23.5h2M28 23.5h1M33 23.5h2M37 23.5h1M39 23.5h1M43 23.5h1M45 23.5h5M54 23.5h1M56 23.5h2M60 23.5h1M0 24.5h2M5 24.5h4M13 24.5h1M17 24.5h2M20 24.5h1M22 24.5h1M24 24.5h2M27 24.5h1M29 24.5h1M32 24.5h1M34 24.5h1M38 24.5h1M41 24.5h2M44 24.5h2M50 24.5h1M54 24.5h1M56 24.5h2M59 24.5h2M1 25.5h3M5 25.5h1M7 25.5h2M10 25.5h1M12 25.5h2M16 25.5h3M27 25.5h3M31 25.5h1M33 25.5h1M37 25.5h2M44 25.5h1M47 25.5h1M49 25.5h1M53 25.5h1M55 25.5h1M57 25.5h4M0 26.5h1M2 26.5h1M6 26.5h1M9 26.5h2M13 26.5h1M15 26.5h1M22 26.5h2M28 26.5h1M30 26.5h1M32 26.5h1M34 26.5h1M37 26.5h6M44 26.5h1M49 26.5h2M52 26.5h7M60 26.5h1M1 27.5h2M4 27.5h1M8 27.5h3M14 27.5h4M20 27.5h1M23 27.5h1M27 27.5h2M30 27.5h1M32 27.5h1M35 27.5h1M38 27.5h1M40 27.5h1M42 27.5h1M45 27.5h1M48 27.5h5M55 27.5h1M57 27.5h1M60 27.5h1M0 28.5h1M4 28.5h5M13 28.5h2M21 28.5h1M25 28.5h1M27 28.5h6M34 28.5h1M39 28.5h4M45 28.5h2M48 28.5h2M52 28.5h5M58 28.5h1M60 28.5h1M0 29.5h2M3 29.5h2M8 29.5h1M10 29.5h1M15 29.5h2M18 29.5h5M26 29.5h1M28 29.5h1M32 29.5h3M36 29.5h1M38 29.5h1M41 29.5h1M44 29.5h2M47 29.5h1M50 29.5h1M52 29.5h1M56 29.5h1M58 29.5h1M0 30.5h2M4 30.5h1M6 30.5h1M8 30.5h1M10 30.5h1M13 30.5h1M16 30.5h7M27 30.5h2M30 30.5h1M32 30.5h1M34 30.5h6M42 30.5h1M44 30.5h1M47 30.5h4M52 30.5h1M54 30.5h1M56 30.5h2M59 30.5h2M0 31.5h1M3 31.5h2M8 31.5h2M12 31.5h2M15 31.5h1M17 31.5h1M21 31.5h2M24 31.5h2M27 31.5h2M32 31.5h3M37 31.5h1M41 31.5h3M46 31.5h1M48 31.5h2M52 31.5h1M56 31.5h1M59 31.5h1M3 32.5h9M16 32.5h3M21 32.5h1M23 32.5h1M26 32.5h7M34 32.5h3M38 32.5h1M40 32.5h1M43 32.5h1M46 32.5h3M50 32.5h9M2 33.5h4M7 33.5h1M9 33.5h1M16 33.5h3M22 33.5h1M24 33.5h2M29 33.5h1M33 33.5h1M35 33.5h1M37 33.5h1M40 33.5h1M42 33.5h2M45 33.5h1M49 33.5h1M51 33.5h2M54 33.5h2M57 33.5h1M60 33.5h1M0 34.5h1M2 34.5h3M6 34.5h5M12 34.5h1M15 34.5h1M19 34.5h2M22 34.5h1M24 34.5h1M28 34.5h2M34 34.5h1M36 34.5h1M38 34.5h1M40 34.5h1M44 34.5h3M48 34.5h1M50 34.5h1M52 34.5h1M57 34.5h4M2 35.5h4M8 35.5h1M14 35.5h2M17 35.5h5M25 35.5h1M27 35.5h2M31 35.5h3M37 35.5h1M39 35.5h1M44 35.5h4M49 35.5h1M51 35.5h1M53 35.5h1M58 35.5h2M0 36.5h1M3 36.5h1M5 36.5h2M8 36.5h2M11 36.5h1M14 36.5h1M18 36.5h2M23 36.5h9M33 36.5h4M38 36.5h5M47 36.5h12M0 37.5h3M4 37.5h1M7 37.5h2M12 37.5h2M15 37.5h2M19 37.5h1M21 37.5h1M23 37.5h2M26 37.5h2M34 37.5h1M36 37.5h2M41 37.5h2M44 37.5h1M48 37.5h1M50 37.5h2M57 37.5h1M0 38.5h1M3 38.5h1M5 38.5h2M8 38.5h1M11 38.5h3M18 38.5h2M23 38.5h4M28 38.5h1M30 38.5h7M38 38.5h2M41 38.5h1M45 38.5h1M47 38.5h3M52 38.5h3M56 38.5h2M59 38.5h1M0 39.5h1M2 39.5h1M5 39.5h1M8 39.5h4M18 39.5h1M23 39.5h1M25 39.5h5M32 39.5h4M41 39.5h8M52 39.5h1M54 39.5h1M56 39.5h3M60 39.5h1M0 40.5h1M2 40.5h2M6 40.5h3M11 40.5h1M13 40.5h1M17 40.5h1M20 40.5h1M22 40.5h2M25 40.5h1M28 40.5h1M31 40.5h1M34 40.5h7M42 40.5h1M44 40.5h2M49 40.5h1M55 40.5h1M57 40.5h1M1 41.5h1M3 41.5h3M8 41.5h1M10 41.5h1M12 41.5h1M14 41.5h2M19 41.5h1M21 41.5h2M24 41.5h4M29 41.5h1M32 41.5h2M35 41.5h2M38 41.5h2M41 41.5h2M44 41.5h1M46 41.5h1M48 41.5h1M50 41.5h1M52 41.5h2M55 41.5h3M59 41.5h1M1 42.5h4M6 42.5h1M10 42.5h4M15 42.5h2M18 42.5h1M21 42.5h1M23 42.5h1M25 42.5h1M27 42.5h1M30 42.5h2M34 42.5h2M38 42.5h1M40 42.5h4M51 42.5h1M55 42.5h2M59 42.5h2M0 43.5h1M9 43.5h1M14 43.5h5M23 43.5h1M25 43.5h1M28 43.5h2M31 43.5h1M34 43.5h1M38 43.5h1M42 43.5h4M47 43.5h1M50 43.5h1M53 43.5h1M58 43.5h2M0 44.5h1M3 44.5h1M5 44.5h2M9 44.5h4M14 44.5h3M19 44.5h1M21 44.5h1M23 44.5h4M32 44.5h3M36 44.5h3M41 44.5h1M45 44.5h3M49 44.5h1M51 44.5h2M54 44.5h1M56 44.5h1M58 44.5h1M60 44.5h1M2 45.5h4M10 45.5h1M14 45.5h1M16 45.5h3M21 45.5h1M26 45.5h1M28 45.5h3M32 45.5h1M34 45.5h1M36 45.5h3M42 45.5h4M48 45.5h4M54 45.5h5M1 46.5h1M3 46.5h4M9 46.5h1M11 46.5h3M15 46.5h2M18 46.5h2M22 46.5h1M24 46.5h1M28 46.5h1M30 46.5h2M33 46.5h2M37 46.5h4M43 46.5h2M46 46.5h4M51 46.5h1M53 46.5h3M57 46.5h4M7 47.5h1M9 47.5h1M12 47.5h4M18 47.5h1M24 47.5h1M26 47.5h1M29 47.5h1M31 47.5h1M34 47.5h1M37 47.5h1M42 47.5h1M47 47.5h1M50 47.5h6M57 47.5h1M59 47.5h2M3 48.5h2M6 48.5h1M11 48.5h1M13 48.5h5M22 48.5h1M27 48.5h1M29 48.5h2M32 48.5h1M36 48.5h1M39 48.5h1M43 48.5h1M46 48.5h1M48 48.5h1M50 48.5h1M52 48.5h1M56 48.5h5M0 49.5h3M7 49.5h1M9 49.5h2M14 49.5h2M17 49.5h2M20 49.5h3M26 49.5h1M29 49.5h2M32 49.5h1M34 49.5h4M41 49.5h4M47 49.5h4M53 49.5h5M59 49.5h2M0 50.5h1M2 50.5h1M4 50.5h1M6 50.5h7M15 50.5h2M23 50.5h1M26 50.5h1M28 50.5h2M37 50.5h1M39 50.5h1M43 50.5h2M46 50.5h1M50 50.5h1M53 50.5h6M2 51.5h3M10 51.5h2M13 51.5h4M18 51.5h3M23 51.5h1M25 51.5h2M30 51.5h1M32 51.5h3M36 51.5h1M38 51.5h1M40 51.5h1M42 51.5h2M45 51.5h2M53 51.5h2M56 51.5h1M59 51.5h2M2 52.5h2M6 52.5h1M10 52.5h3M14 52.5h1M17 52.5h2M22 52.5h3M28 52.5h5M35 52.5h1M39 52.5h2M42 52.5h1M45 52.5h5M52 52.5h6M60 52.5h1M8 53.5h2M20 53.5h4M26 53.5h1M28 53.5h1M32 53.5h1M37 53.5h4M43 53.5h1M45 53.5h3M49 53.5h1M51 53.5h2M56 53.5h1M59 53.5h1M0 54.5h7M8 54.5h1M11 54.5h2M15 54.5h1M17 54.5h1M19 54.5h2M22 54.5h1M24 54.5h1M26 54.5h1M28 54.5h1M30 54.5h1M32 54.5h5M38 54.5h1M41 54.5h1M43 54.5h3M47 54.5h1M49 54.5h2M52 54.5h1M54 54.5h1M56 54.5h1M58 54.5h2M0 55.5h1M6 55.5h1M8 55.5h1M10 55.5h1M12 55.5h1M14 55.5h1M18 55.5h1M20 55.5h2M23 55.5h2M27 55.5h2M32 55.5h1M34 55.5h1M36 55.5h6M43 55.5h1M45 55.5h4M50 55.5h3M56 55.5h2M60 55.5h1M0 56.5h1M2 56.5h3M6 56.5h1M8 56.5h1M10 56.5h1M12 56.5h1M14 56.5h1M17 56.5h3M22 56.5h1M24 56.5h2M27 56.5h7M35 56.5h1M37 56.5h2M42 56.5h4M49 56.5h1M51 56.5h6M0 57.5h1M2 57.5h3M6 57.5h1M8 57.5h1M10 57.5h1M14 57.5h1M16 57.5h1M20 57.5h3M24 57.5h2M27 57.5h3M31 57.5h1M33 57.5h3M37 57.5h2M40 57.5h2M44 57.5h1M46 57.5h1M49 57.5h4M55 57.5h1M58 57.5h1M60 57.5h1M0 58.5h1M2 58.5h3M6 58.5h1M8 58.5h1M11 58.5h1M13 58.5h1M15 58.5h2M19 58.5h2M25 58.5h1M28 58.5h2M31 58.5h1M34 58.5h1M37 58.5h1M40 58.5h2M45 58.5h1M49 58.5h1M52 58.5h3M57 58.5h1M0 59.5h1M6 59.5h1M12 59.5h4M18 59.5h1M21 59.5h1M25 59.5h2M28 59.5h1M30 59.5h3M35 59.5h1M37 59.5h1M39 59.5h1M45 59.5h1M48 59.5h1M51 59.5h1M54 59.5h1M56 59.5h2M0 60.5h7M9 60.5h2M12 60.5h2M15 60.5h2M18 60.5h1M20 60.5h2M23 60.5h4M30 60.5h1M32 60.5h1M34 60.5h4M39 60.5h1M41 60.5h6M52 60.5h1M54 60.5h1M60 60.5h1" stroke="#000" stroke-width="1" fill="none"/></svg>
<span class="t" id="t_lg1" style="left:150.00px;top:13.00px;font-size:10.2px;color:#1b2f5e;transform:scaleX(0.9746);font-weight:bold;-webkit-text-stroke:0.3px #1b2f5e">Market</span>
<span class="t" id="t_lg2" style="left:150.00px;top:23.00px;font-size:10.2px;color:#1b2f5e;transform:scaleX(0.8587);font-weight:bold;-webkit-text-stroke:0.3px #1b2f5e">Research</span>
<span class="t" id="t_lg3" style="left:150.00px;top:34.00px;font-size:10.2px;color:#1b2f5e;transform:scaleX(0.8525);font-weight:bold;-webkit-text-stroke:0.3px #1b2f5e">Reports</span>
<span class="t" id="t_lgr" style="left:183.00px;top:10.00px;font-size:6px;color:#1b2f5e;transform:scaleX(0.8800)">®</span>
<a class="t" id="t_n1" href="#" style="left:382.40px;top:20.00px;font-size:13.5px;color:#1b3d55;transform:scaleX(0.9631);font-weight:bold">HOME</a>
<a class="t" id="t_n2" href="#" style="left:449.30px;top:20.00px;font-size:13.5px;color:#1b3d55;transform:scaleX(0.9115);font-weight:bold">FAQS</a>
<a class="t" id="t_n3" href="#" style="left:510.00px;top:20.00px;font-size:13.5px;color:#1b3d55;transform:scaleX(0.9293);font-weight:bold">CONTACT US</a>
<a class="t" id="t_n4" href="#" style="left:618.90px;top:20.00px;font-size:13.5px;color:#1b3d55;transform:scaleX(0.9033);font-weight:bold">BECOME PUBLISHER</a>
<a class="t" id="t_n5" href="#" style="left:773.40px;top:20.00px;font-size:13.5px;color:#1bbfb3;transform:scaleX(0.9050);font-weight:bold">RESEARCH SUBSCRIPTION</a>
<a class="t" id="t_cartt" href="#" style="left:1003.40px;top:18.00px;font-size:15.4px;color:#c0202f;transform:scaleX(0.9484);-webkit-text-stroke:0.2px #c0202f">0 items $0.00</a>
<span class="t" id="t_sph" style="left:41.60px;top:110.00px;font-size:15px;color:#888;transform:scaleX(0.9452)">Search Keyword</span>
<span class="t" id="t_sbt" style="left:903.90px;top:111.00px;font-size:15.5px;color:#fff;transform:scaleX(0.9256);font-weight:bold;-webkit-text-stroke:0.3px #fff">SEARCH</span>
<span class="t" id="t_b0" style="left:11.75px;top:190.00px;font-size:15px;color:#777;transform:scaleX(0.9536)">You are here:</span>
<a class="t" id="t_b1" href="#" style="left:104.52px;top:190.00px;font-size:15px;color:#f90;transform:scaleX(0.9801)">Home</a>
<span class="t" id="t_g1" style="left:151.80px;top:190.00px;font-size:15px;color:#888;transform:scaleX(0.6000)">&gt;</span>
<a class="t" id="t_b2" href="#" style="left:166.90px;top:190.00px;font-size:15px;color:#f90;transform:scaleX(0.9424)">Catalog</a>
<span class="t" id="t_g2" style="left:225.00px;top:190.00px;font-size:15px;color:#888;transform:scaleX(0.6000)">&gt;</span>
<a class="t" id="t_b3" href="#" style="left:238.80px;top:190.00px;font-size:15px;color:#f90;transform:scaleX(0.9391)">Consumer &amp; Retail</a>
<span class="t" id="t_g3" style="left:366.00px;top:190.00px;font-size:15px;color:#888;transform:scaleX(0.6000)">&gt;</span>
<a class="t" id="t_b4" href="#" style="left:379.04px;top:190.00px;font-size:15px;color:#f90;transform:scaleX(0.9565)">House &amp; Home</a>
<span class="t" id="t_g4" style="left:485.30px;top:190.00px;font-size:15px;color:#888;transform:scaleX(0.6000)">&gt;</span>
<a class="t" id="t_b5" href="#" style="left:498.04px;top:190.00px;font-size:15px;color:#f90;transform:scaleX(0.9622)">Lawn &amp; Garden</a>
<h1 class="t" id="t_title" style="left:10.75px;top:251.00px;font-size:35px;color:#14bdb0;transform:scaleX(1.0236);-webkit-text-stroke:0.5px #fff">Home &amp; Garden Products Global Industry Guide 2018-2022</h1>
<span class="t" id="t_ct1" style="left:50.52px;top:453.00px;font-size:19px;color:#333;transform:scaleX(0.9789);-webkit-text-stroke:0.45px #fff">Home &amp; Garden Products Global</span>
<span class="t" id="t_ct2" style="left:50.54px;top:474.00px;font-size:19px;color:#333;transform:scaleX(0.9636);-webkit-text-stroke:0.45px #fff">Industry Guide 2018-2022</span>
<span class="t" id="t_url" style="left:84.00px;top:756.00px;font-size:15px;color:#eef0f2;transform:scaleX(0.9491);font-family:'DejaVu Sans','Liberation Sans',sans-serif">www.marketresearchreports.com</span>
<a class="t" id="t_pv" href="#" style="left:41.04px;top:804.00px;font-size:15px;color:#f90;transform:scaleX(0.9648)">Printer version</a>
<a class="t" id="t_se" href="#" style="left:165.90px;top:804.00px;font-size:15px;color:#f90;transform:scaleX(0.9428)">Send by email</a>
<span class="t" id="t_l1" style="left:415.90px;top:336.00px;font-size:14.7px;color:#0e7fc9;transform:scaleX(0.9654);font-weight:bold">Publication ID:</span>
<span class="t" id="t_l2" style="left:415.90px;top:361.00px;font-size:14.7px;color:#0e7fc9;transform:scaleX(0.9692);font-weight:bold">Publication Date:</span>
<span class="t" id="t_l3" style="left:415.90px;top:386.00px;font-size:14.7px;color:#0e7fc9;transform:scaleX(0.9096);font-weight:bold">Pages:</span>
<span class="t" id="t_l4" style="left:415.90px;top:410.00px;font-size:14.7px;color:#0e7fc9;transform:scaleX(0.9376);font-weight:bold">Publisher:</span>
<span class="t" id="t_l5" style="left:415.90px;top:435.00px;font-size:14.7px;color:#0e7fc9;transform:scaleX(0.9401);font-weight:bold">Countries:</span>
<span class="t" id="t_v1" style="left:545.07px;top:336.00px;font-size:14.7px;color:#777;transform:scaleX(0.9255)">MLI0318060</span>
<span class="t" id="t_v2" style="left:545.10px;top:361.00px;font-size:14.7px;color:#777;transform:scaleX(0.9030)">March 16, 2018</span>
<span class="t" id="t_v3" style="left:546.00px;top:386.00px;font-size:14.7px;color:#777;transform:scaleX(0.7930)">291</span>
<span class="t" id="t_v4" style="left:545.00px;top:410.00px;font-size:14.7px;color:#777;transform:scaleX(0.9988)">MarketLine</span>
<a class="t" id="t_v5" href="#" style="left:546.00px;top:435.00px;font-size:14.7px;color:#f90;transform:scaleX(0.9551)">Global</a>
<span class="t" id="t_price" style="left:695.00px;top:459.00px;font-size:18.2px;color:#be1e2d;transform:scaleX(0.9901);font-weight:bold">$1,495.00</span>
<span class="t" id="t_plt" style="left:414.75px;top:485.00px;font-size:15px;color:#777;transform:scaleX(0.9496)">Publication License Type</span>
<span class="t" id="t_star" style="left:576.60px;top:485.00px;font-size:15px;color:#e8112d;transform:scaleX(1.0000);font-weight:bold">*</span>
<label class="t" id="t_lt1" style="left:471.00px;top:538.00px;font-size:14.8px;color:#222;transform:scaleX(0.8526)">SINGLE USER LICENSE (PDF), $1,495.00</label>
<label class="t" id="t_lt2" style="left:471.00px;top:605.00px;font-size:14.8px;color:#222;transform:scaleX(0.8617)">SITE LICENSE (PDF), $2,990.00</label>
<label class="t" id="t_lt3" style="left:471.00px;top:672.00px;font-size:14.8px;color:#222;transform:scaleX(0.8843)">GLOBAL LICENSE (PDF), $4,485.00</label>
<p class="t" id="t_nt1" style="left:415.04px;top:723.00px;font-size:15px;color:#777;transform:scaleX(0.9597)">Please choose the suitable license type from above.</p>
<p class="t" id="t_nt2" style="left:415.04px;top:747.00px;font-size:15px;color:#777;transform:scaleX(0.9600)">More details are at given under tab &quot;Report License</p>
<p class="t" id="t_nt3" style="left:416.00px;top:772.00px;font-size:15px;color:#777;transform:scaleX(0.9618)">Types&quot; below.</p>
<span class="t" id="t_atc" style="left:533.00px;top:827.00px;font-size:17.8px;color:#fff;transform:scaleX(1.0139);font-weight:bold;-webkit-text-stroke:0.4px #fff">ADD TO CART</span>
<h2 class="t" id="t_why" style="left:874.80px;top:350.00px;font-size:24.4px;color:#1b3d55;transform:scaleX(0.9933)">Why to buy from us?</h2>
<h3 class="t" id="t_p1" style="left:839.80px;top:421.00px;font-size:16.5px;color:#fff;transform:scaleX(1.0306);-webkit-text-stroke:0.35px #fff">Globally Trusted Brand</h3>
<h3 class="t" id="t_p2" style="left:836.50px;top:582.00px;font-size:16.5px;color:#fff;transform:scaleX(1.0512);-webkit-text-stroke:0.35px #fff">Shop With Confidence</h3>
<h3 class="t" id="t_p3" style="left:836.50px;top:646.00px;font-size:16.5px;color:#fff;transform:scaleX(1.0206);-webkit-text-stroke:0.35px #fff">Secure Checkout</h3>
<h3 class="t" id="t_p4" style="left:834.95px;top:710.00px;font-size:16.5px;color:#fff;transform:scaleX(1.0450);-webkit-text-stroke:0.35px #fff">Frequently Asked Questions</h3>
<p class="t" id="t_pb1" style="left:821.00px;top:472.00px;font-size:15px;color:#777;transform:scaleX(0.9702)">We help executives from <a>Fortune 500</a> firms to</p>
<p class="t" id="t_pb2" style="left:821.00px;top:497.00px;font-size:15px;color:#777;transform:scaleX(0.9700)">Start-ups with their market research needs thus we</p>
<p class="t" id="t_pb3" style="left:821.00px;top:522.00px;font-size:15px;color:#777;transform:scaleX(0.9701)">can help you too.</p>
</body>
</html>
